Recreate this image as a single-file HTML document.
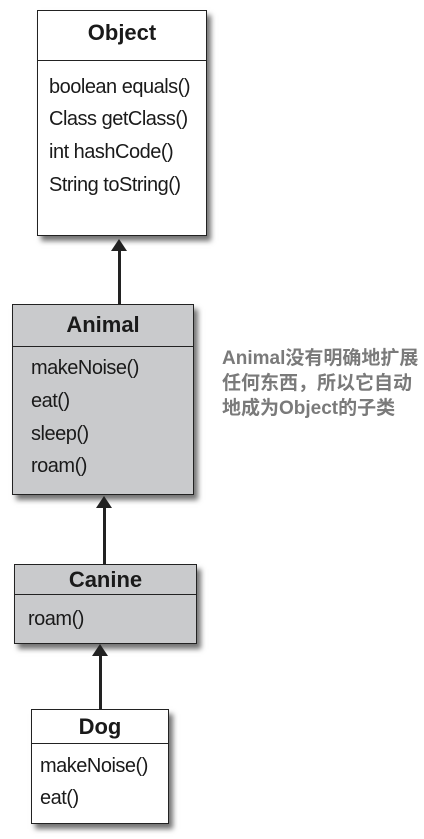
<!DOCTYPE html>
<html><head><meta charset="utf-8"><style>
body{margin:0;width:424px;height:839px;background:#fff;position:relative;overflow:hidden;font-family:"Liberation Sans",Arial,sans-serif;color:#1a1a1a}
.box{position:absolute;border:1.5px solid #222;box-sizing:border-box;box-shadow:4px 5px 5px rgba(0,0,0,.55)}
.hd{position:absolute;left:0;right:0;top:0;border-bottom:1.5px solid #222;text-align:center;font-weight:bold;font-size:22px;box-sizing:border-box}
.ln{position:absolute;font-size:20px;letter-spacing:-0.5px;white-space:nowrap}
.gray{background:#c9cacc}
.v{position:absolute;width:3px;background:#222}
.tri{position:absolute;width:0;height:0;border-left:8px solid transparent;border-right:8px solid transparent;border-bottom:12px solid #222}
.note{position:absolute;left:222px;top:346px;font-family:"Liberation Sans","Noto Sans CJK SC",sans-serif;font-weight:bold;font-size:19px;line-height:25px;color:#7a7a7a;white-space:nowrap}
</style></head><body>
<div class="box" style="left:37px;top:10px;width:170px;height:226px;background:#fff">
 <div class="hd" style="height:50px;line-height:44px">Object</div>
 <div class="ln" style="left:11px;top:65px">boolean equals()</div>
 <div class="ln" style="left:11px;top:97px">Class getClass()</div>
 <div class="ln" style="left:11px;top:130px">int hashCode()</div>
 <div class="ln" style="left:11px;top:163px">String toString()</div>
</div>
<div class="tri" style="left:111px;top:239px"></div>
<div class="v" style="left:118px;top:250px;height:55px"></div>

<div class="box gray" style="left:12px;top:304px;width:182px;height:191px">
 <div class="hd" style="height:42px;line-height:40px">Animal</div>
 <div class="ln" style="left:18px;top:52px">makeNoise()</div>
 <div class="ln" style="left:18px;top:85px">eat()</div>
 <div class="ln" style="left:18px;top:118px">sleep()</div>
 <div class="ln" style="left:18px;top:150px">roam()</div>
</div>
<div class="tri" style="left:96px;top:496px"></div>
<div class="v" style="left:103px;top:507px;height:58px"></div>

<div class="box gray" style="left:14px;top:564px;width:183px;height:80px">
 <div class="hd" style="height:30px;line-height:30px">Canine</div>
 <div class="ln" style="left:13px;top:43px">roam()</div>
</div>
<div class="tri" style="left:92px;top:644px"></div>
<div class="v" style="left:99px;top:655px;height:55px"></div>

<div class="box" style="left:31px;top:709px;width:138px;height:115px;background:#fff">
 <div class="hd" style="height:34px;line-height:34px">Dog</div>
 <div class="ln" style="left:8px;top:45px">makeNoise()</div>
 <div class="ln" style="left:8px;top:77px">eat()</div>
</div>

<div class="note">Animal没有明确地扩展<br>任何东西，所以它自动<br>地成为Object的子类</div>
</body></html>
